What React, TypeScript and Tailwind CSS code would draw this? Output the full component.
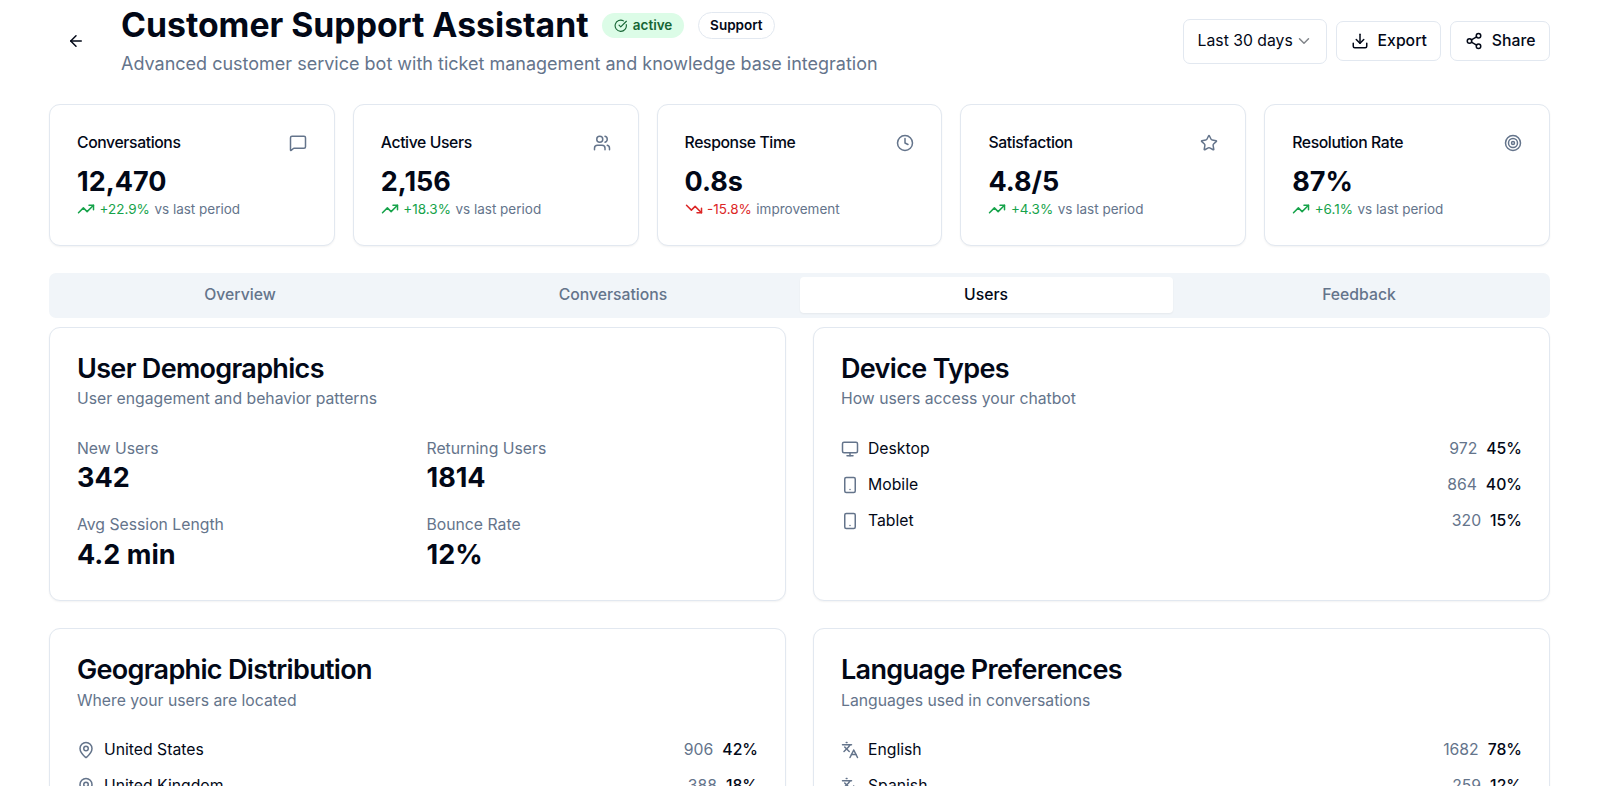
import {
  ArrowLeft,
  ChevronDown,
  CircleCheckBig,
  Clock,
  Download,
  Languages,
  MapPin,
  MessageSquare,
  Monitor,
  Share2,
  Smartphone,
  Star,
  Target,
  TrendingDown,
  TrendingUp,
  Users,
} from 'lucide-react';
import type { LucideIcon } from 'lucide-react';
import type { ReactNode } from 'react';

const stats = [
  { label: 'Conversations', value: '12,470', change: '+22.9%', note: 'vs last period', icon: MessageSquare, up: true },
  { label: 'Active Users', value: '2,156', change: '+18.3%', note: 'vs last period', icon: Users, up: true },
  { label: 'Response Time', value: '0.8s', change: '-15.8%', note: 'improvement', icon: Clock, up: false },
  { label: 'Satisfaction', value: '4.8/5', change: '+4.3%', note: 'vs last period', icon: Star, up: true },
  { label: 'Resolution Rate', value: '87%', change: '+6.1%', note: 'vs last period', icon: Target, up: true },
];

const tabs = ['Overview', 'Conversations', 'Users', 'Feedback'];

const demographics = [
  { label: 'New Users', value: '342' },
  { label: 'Returning Users', value: '1814' },
  { label: 'Avg Session Length', value: '4.2 min' },
  { label: 'Bounce Rate', value: '12%' },
];

const devices = [
  { label: 'Desktop', count: 972, pct: '45%', icon: Monitor },
  { label: 'Mobile', count: 864, pct: '40%', icon: Smartphone },
  { label: 'Tablet', count: 320, pct: '15%', icon: Smartphone },
];

const countries = [
  { label: 'United States', count: 906, pct: '42%', icon: MapPin },
  { label: 'United Kingdom', count: 388, pct: '18%', icon: MapPin },
];

const languages = [
  { label: 'English', count: 1682, pct: '78%', icon: Languages },
  { label: 'Spanish', count: 259, pct: '12%', icon: Languages },
];

function Panel({ title, subtitle, children }: { title: string; subtitle: string; children: ReactNode }) {
  return (
    <div className="rounded-[11px] border border-[#e2e8f0] bg-white shadow-[0_1px_2px_0_rgba(0,0,0,0.05)]">
      <div className="flex flex-col gap-[6.75px] p-[27px]">
        <h3 className="text-[27px] leading-[27px] font-semibold tracking-[-0.675px] text-[#020817]">{title}</h3>
        <p className="text-[15.75px] leading-[22.5px] text-[#64748b]">{subtitle}</p>
      </div>
      <div className="px-[27px] pb-[27px]">{children}</div>
    </div>
  );
}

function BreakdownList({ rows }: { rows: { label: string; count: number; pct: string; icon: LucideIcon }[] }) {
  return (
    <div className="flex flex-col gap-[13.5px]">
      {rows.map((row) => (
        <div key={row.label} className="flex items-center justify-between">
          <div className="flex items-center gap-[9px]">
            <row.icon className="h-[18px] w-[18px] text-[#64748b]" />
            <span className="text-[15.75px] leading-[22.5px] text-[#020817]">{row.label}</span>
          </div>
          <div className="flex items-center gap-[9px] text-[15.75px] leading-[22.5px]">
            <span className="text-[#64748b]">{row.count}</span>
            <span className="font-medium text-[#020817]">{row.pct}</span>
          </div>
        </div>
      ))}
    </div>
  );
}

export default function App() {
  return (
    <div className="h-[786px] overflow-hidden bg-white pr-[50px] pl-[49px] font-['Inter',sans-serif] text-[#020817]">
      <header className="flex items-center justify-between pt-[5px]">
        <div className="flex items-center gap-[18px]">
          <button className="flex h-[45px] w-[54px] items-center justify-center">
            <ArrowLeft className="h-[18px] w-[18px]" />
          </button>
          <div>
            <div className="flex items-center gap-[13.5px]">
              <h1 className="text-[33.75px] leading-[40.5px] font-bold">Customer Support Assistant</h1>
              <span className="flex items-center gap-[5.5px] rounded-full bg-[#dcfce7] px-[11.75px] py-[2.25px] text-[13.5px] leading-[20.25px] font-semibold text-[#166534]">
                <CircleCheckBig className="h-[13.5px] w-[13.5px]" />
                active
              </span>
              <span className="rounded-full border border-[#e2e8f0] px-[11.5px] py-[2.25px] text-[13.5px] leading-[20.25px] font-semibold">
                Support
              </span>
            </div>
            <p className="mt-[4.5px] text-[18px] leading-[27px] text-[#64748b]">
              Advanced customer service bot with ticket management and knowledge base integration
            </p>
          </div>
        </div>
        <div className="flex items-center gap-[9px]">
          <button className="flex h-[45px] w-[144px] items-center justify-between rounded-[7px] border border-[#e2e8f0] px-[13.5px] text-[15.75px]">
            Last 30 days
            <ChevronDown className="h-[18px] w-[18px] text-[#808489]" />
          </button>
          <button className="flex h-[40.5px] items-center gap-[9px] rounded-[7px] border border-[#e2e8f0] px-[13.5px] text-[15.75px] font-medium">
            <Download className="h-[18px] w-[18px]" />
            Export
          </button>
          <button className="flex h-[40.5px] items-center gap-[9px] rounded-[7px] border border-[#e2e8f0] px-[13.5px] text-[15.75px] font-medium">
            <Share2 className="h-[18px] w-[18px]" />
            Share
          </button>
        </div>
      </header>

      <section className="mt-[27px] grid grid-cols-5 gap-[18px]">
        {stats.map((stat) => {
          const Trend = stat.up ? TrendingUp : TrendingDown;
          return (
            <div
              key={stat.label}
              className="rounded-[11px] border border-[#e2e8f0] bg-white p-[27px] shadow-[0_1px_2px_0_rgba(0,0,0,0.05)]"
            >
              <div className="flex items-center justify-between pb-[9px]">
                <span className="text-[15.75px] leading-[22.5px] font-medium tracking-[-0.39px]">{stat.label}</span>
                <stat.icon className="h-[18px] w-[18px] text-[#64748b]" />
              </div>
              <div className="text-[27px] leading-[36px] font-bold">{stat.value}</div>
              <div className="flex items-center gap-[4.5px] text-[13.5px] leading-[18px] text-[#64748b]">
                <Trend className={stat.up ? 'h-[18px] w-[18px] text-[#16a34a]' : 'h-[18px] w-[18px] text-[#dc2626]'} />
                <span className={stat.up ? 'text-[#16a34a]' : 'text-[#dc2626]'}>{stat.change}</span>
                <span>{stat.note}</span>
              </div>
            </div>
          );
        })}
      </section>

      <nav className="mt-[27px] grid h-[45px] grid-cols-4 rounded-[7px] bg-[#f1f5f9] p-[4.5px]">
        {tabs.map((tab) => (
          <div
            key={tab}
            className={
              tab === 'Users'
                ? 'flex items-center justify-center rounded-[4px] bg-white text-[15.75px] font-medium text-[#020817] shadow-[0_1px_2px_0_rgba(0,0,0,0.05)]'
                : 'flex items-center justify-center text-[15.75px] font-medium text-[#64748b]'
            }
          >
            {tab}
          </div>
        ))}
      </nav>

      <section className="mt-[9px] grid grid-cols-2 gap-[27px]">
        <Panel title="User Demographics" subtitle="User engagement and behavior patterns">
          <div className="grid grid-cols-2 gap-[18px]">
            {demographics.map((item) => (
              <div key={item.label}>
                <div className="text-[15.75px] leading-[22.5px] text-[#64748b]">{item.label}</div>
                <div className="text-[27px] leading-[36px] font-bold">{item.value}</div>
              </div>
            ))}
          </div>
        </Panel>
        <Panel title="Device Types" subtitle="How users access your chatbot">
          <BreakdownList rows={devices} />
        </Panel>
        <Panel title="Geographic Distribution" subtitle="Where your users are located">
          <BreakdownList rows={countries} />
        </Panel>
        <Panel title="Language Preferences" subtitle="Languages used in conversations">
          <BreakdownList rows={languages} />
        </Panel>
      </section>
    </div>
  );
}
